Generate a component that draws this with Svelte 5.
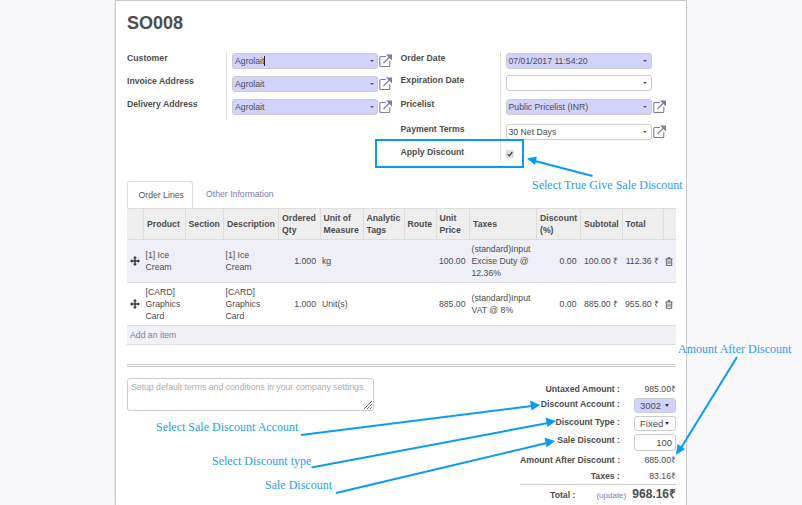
<script>
  const cols = [16.5, 41.5, 38.5, 55, 41.5, 43, 41, 32, 33.5, 67, 44, 41.5, 41, 13];
  const heads = [
    { t: '' }, { t: 'Product' }, { t: 'Section' }, { t: 'Description' }, { t: 'Ordered Qty' },
    { t: 'Unit of Measure' }, { t: 'Analytic Tags' }, { t: 'Route' }, { t: 'Unit Price' },
    { t: 'Taxes' }, { t: 'Discount (%)' }, { t: 'Subtotal' }, { t: 'Total' }, { t: '' }
  ];
  const lines = [
    { product: '[1] Ice Cream', unit: 'kg', price: '100.00', taxes: '(standard)Input Excise Duty @ 12.36%', sub: '100.00 ₹', total: '112.36 ₹', shade: true },
    { product: '[CARD] Graphics Card', unit: 'Unit(s)', price: '885.00', taxes: '(standard)Input VAT @ 8%', sub: '885.00 ₹', total: '955.80 ₹', shade: false }
  ];
</script>

{#snippet ext()}
  <svg class="ext" viewBox="0 0 13 13" width="13" height="13" aria-hidden="true">
    <path d="M7 2.5H2a1.2 1.2 0 0 0-1.2 1.2v7.6A1.2 1.2 0 0 0 2 12.5h7.6a1.2 1.2 0 0 0 1.2-1.2V7" fill="none" stroke="#7c7bad" stroke-width="1.1"/>
    <path d="M4.5 9 11 2.5M8.2 1h4.3v4.3z" fill="#7c7bad" stroke="#7c7bad" stroke-width="1.1"/>
  </svg>
{/snippet}

{#snippet drag()}
  <svg viewBox="0 0 10 10" width="10" height="10" aria-hidden="true">
    <path d="M5 0 7 2.2H5.7V4.3H7.8V3L10 5 7.8 7V5.7H5.7V7.8H7L5 10 3 7.8H4.3V5.7H2.2V7L0 5 2.2 3V4.3H4.3V2.2H3z" fill="#333"/>
  </svg>
{/snippet}

{#snippet trash()}
  <svg viewBox="0 0 8 9" width="8" height="9" aria-hidden="true">
    <path d="M.5 2h7M3 2V.7h2V2M1.3 2v6.4h5.4V2M3 3.5v3.5M5 3.5v3.5" fill="none" stroke="#555" stroke-width=".9"/>
  </svg>
{/snippet}

<div class="page">
  <main class="sheet">
    <h1>SO008</h1>

    <section class="groups">
      <div class="group left">
        <div class="labels">
          <label>Customer</label>
          <label>Invoice Address</label>
          <label>Delivery Address</label>
        </div>
        <div class="fields">
          <div class="fr"><span class="sel req">Agrolait<i class="cursor"></i><b class="car"></b></span>{@render ext()}</div>
          <div class="fr"><span class="sel req">Agrolait<b class="car"></b></span>{@render ext()}</div>
          <div class="fr"><span class="sel req">Agrolait<b class="car"></b></span>{@render ext()}</div>
        </div>
      </div>
      <div class="group right">
        <div class="labels">
          <label class="r1">Order Date</label>
          <label class="r2">Expiration Date</label>
          <label class="r3">Pricelist</label>
          <label class="r4">Payment Terms</label>
          <label class="r5">Apply Discount</label>
        </div>
        <div class="fields">
          <div class="fr r1"><span class="sel req">07/01/2017 11:54:20<b class="car"></b></span></div>
          <div class="fr r2"><span class="sel"><b class="car"></b></span></div>
          <div class="fr r3"><span class="sel req">Public Pricelist (INR)<b class="car"></b></span>{@render ext()}</div>
          <div class="fr r4"><span class="sel">30 Net Days<b class="car"></b></span>{@render ext()}</div>
          <div class="fr r5"><span class="check">
            <svg viewBox="0 0 8 8" width="6" height="6" aria-hidden="true"><path d="M1 4.5 3 6.5 7 1.5" fill="none" stroke="#333" stroke-width="1.6"/></svg>
          </span></div>
        </div>
      </div>
    </section>

    <nav class="tabs">
      <span class="tab active">Order Lines</span>
      <span class="tab">Other Information</span>
    </nav>

    <table>
      <colgroup>
        {#each cols as c}<col style:width="{c}px" />{/each}
      </colgroup>
      <thead>
        <tr>{#each heads as h}<th>{h.t}</th>{/each}</tr>
      </thead>
      <tbody>
        {#each lines as l}
          <tr class:shade={l.shade}>
            <td class="dr">{@render drag()}</td>
            <td>{l.product}</td>
            <td></td>
            <td>{l.product}</td>
            <td class="num">1.000</td>
            <td>{l.unit}</td>
            <td></td>
            <td></td>
            <td class="num">{l.price}</td>
            <td>{l.taxes}</td>
            <td class="num">0.00</td>
            <td class="num">{l.sub}</td>
            <td class="num">{l.total}</td>
            <td class="tr">{@render trash()}</td>
          </tr>
        {/each}
        <tr class="add"><td colspan="14"><span>Add an item</span></td></tr>
      </tbody>
    </table>

    <hr />

    <section class="bottom">
      <div class="notes">Setup default terms and conditions in your company settings.
        <svg class="grip" viewBox="0 0 8 8" width="8" height="8" aria-hidden="true"><path d="M0 8 8 0M3 8 8 3M6 8 8 6" stroke="#444" stroke-width=".8" fill="none"/></svg>
      </div>
      <div class="totals">
        <div class="t t1"><span>Untaxed Amount :</span><em>985.00₹</em></div>
        <div class="t t2"><span>Discount Account :</span><em class="mini req"><i class="clip">30020</i><b class="car dark"></b></em></div>
        <div class="t t3"><span>Discount Type :</span><em class="mini">Fixed<b class="car dark"></b></em></div>
        <div class="t t4"><span>Sale Discount :</span><em class="inp">100</em></div>
        <div class="t t5"><span>Amount After Discount :</span><em>885.00₹</em></div>
        <div class="t t6"><span>Taxes :</span><em>83.16₹</em></div>
        <div class="grand"><span>Total :</span><a href="#update">(update)</a><strong>968.16₹</strong></div>
      </div>
    </section>
  </main>

  <div class="overlay">
    <div class="box"></div>
    <svg class="arrows" width="802" height="505" viewBox="0 0 802 505" aria-hidden="true">
      <g stroke="#0a9bf5" stroke-width="2" fill="#0a9bf5">
        <line x1="592.5" y1="176" x2="535" y2="161" />
        <line x1="301" y1="435" x2="532" y2="406" />
        <line x1="311.5" y1="467.5" x2="548" y2="423" />
        <line x1="336" y1="493" x2="547" y2="443" />
        <line x1="737" y1="357" x2="681" y2="448" />
      </g>
      <g fill="#0a9bf5">
        <polygon points="527,158.5 537,156.5 535,165" />
        <polygon points="540,405 530,400.5 531.5,410.5" />
        <polygon points="556,421 545.5,417.5 547.5,427" />
        <polygon points="555,441 544.5,437.5 546.5,447.5" />
        <polygon points="676,455 677.5,444 685,449" />
      </g>
    </svg>
    <span class="note n1">Select True Give Sale Discount</span>
    <span class="note n2">Amount After Discount</span>
    <span class="note n3">Select Sale Discount Account</span>
    <span class="note n4">Select Discount type</span>
    <span class="note n5">Sale Discount</span>
  </div>
</div>

<style>
  :global(body) {
    margin: 0;
    background: #f8f8fb;
    overflow: hidden;
  }
  .page {
    position: relative;
    width: 802px;
    height: 505px;
    overflow: hidden;
    font-family: "Liberation Sans", Arial, sans-serif;
    font-size: 8.7px;
    color: #4c4c4c;
  }
  .sheet {
    box-sizing: border-box;
    width: 572px;
    height: 505px;
    margin-left: 115px;
    padding: 0 10px 0 11px;
    background: #fff;
    border: 1px solid #c9c9d2;
    border-bottom: 0;
    box-shadow: -1px 0 2px rgba(0, 0, 0, 0.06);
  }
  h1 {
    margin: 0;
    padding-top: 12px;
    height: 39px;
    box-sizing: border-box;
    font-size: 18px;
    line-height: 21px;
    font-weight: 700;
    color: #4c4c4c;
  }
  .groups {
    display: flex;
    height: 141px;
    padding-top: 12px;
    box-sizing: border-box;
  }
  .group { display: flex; }
  .left { width: 273.5px; }
  .labels label {
    display: block;
    font-weight: 700;
    white-space: nowrap;
  }
  .left .labels { width: 99px; }
  .left .labels label { height: 23px; line-height: 12px; }
  .left .fields {
    height: 68px;
    padding-left: 5px;
    border-left: 1px solid #ddd;
  }
  .left .fr { height: 23px; padding-top: 1px; box-sizing: border-box; }
  .fr { display: flex; align-items: flex-start; }
  .right .labels { width: 99px; }
  .right .fields {
    height: 109px;
    padding-left: 5px;
    border-left: 1px solid #ddd;
  }
  .right .labels label { line-height: 12px; }
  .right label.r1 { height: 22px; }
  .right label.r2 { height: 24px; }
  .right label.r3 { height: 25px; }
  .right label.r4 { height: 23px; }
  .right .fr { box-sizing: border-box; padding-top: 1px; }
  .right .fr.r1 { height: 22px; }
  .right .fr.r2 { height: 24px; }
  .right .fr.r3 { height: 25px; }
  .right .fr.r4 { height: 26px; }
  .sel {
    position: relative;
    display: block;
    box-sizing: border-box;
    width: 146px;
    height: 16px;
    padding: 0 2px;
    line-height: 14px;
    background: #fff;
    border: 1px solid #ccc;
    border-radius: 3px;
    white-space: nowrap;
  }
  .req { background: #d2d2ff; }
  .car {
    position: absolute;
    right: 3.5px;
    top: 6px;
    border-left: 2px solid transparent;
    border-right: 2px solid transparent;
    border-top: 2px solid #555;
  }
  .car.dark {
    top: 50%;
    right: 6px;
    margin-top: -1px;
    border-top: 3px solid #333;
  }
  .cursor {
    display: inline-block;
    width: 1px;
    height: 10px;
    background: #222;
    vertical-align: -2px;
  }
  .ext { margin: 1px 0 0 1px; flex: none; }
  .check {
    display: flex;
    align-items: center;
    justify-content: center;
    width: 8px;
    height: 8px;
    background: #ddd;
    border-radius: 1px;
  }
  .tabs {
    display: flex;
    height: 27px;
    box-sizing: border-box;
  }
  .tab {
    box-sizing: border-box;
    height: 27px;
    padding: 0 10.5px;
    line-height: 27px;
    color: #7c7bad;
    white-space: nowrap;
  }
  .tab + .tab { margin-left: 2.5px; }
  .tab.active {
    width: 66px;
    color: #555;
    background: #fff;
    border: 1px solid #ddd;
    border-bottom: 0;
    border-radius: 3px 3px 0 0;
    position: relative;
    z-index: 1;
    line-height: 26px;
  }
  table {
    table-layout: fixed;
    width: 549px;
    border-collapse: collapse;
    line-height: 12px;
  }
  th {
    height: 31px;
    box-sizing: border-box;
    padding: 0 2px 0 3px;
    text-align: left;
    font-weight: 700;
    background: #eee;
    border: 1px solid #ddd;
    border-width: 1px 1px 1px 0;
    overflow: hidden;
  }
  th:last-child { border-right: 0; }
  td {
    height: 43px;
    box-sizing: border-box;
    padding: 0 2px 0 2px;
    border-bottom: 1px solid #ddd;
    overflow: hidden;
    vertical-align: middle;
  }
  .shade td { background: #eeeff7; }
  .num { text-align: right; padding-right: 4px; white-space: nowrap; }
  .dr { padding: 0 0 0 3px; }
  .dr svg, .tr svg { display: block; }
  td.tr { padding: 0 0 0 2px; }
  .add td {
    height: 19px;
    background: #f0f0f7;
    padding-left: 3px;
    color: #7c7bad;
  }
  hr {
    margin: 19px 0 0;
    height: 3px;
    box-sizing: border-box;
    border: 0;
    border-top: 1px solid #ccc;
    border-bottom: 1px solid #ccc;
  }
  .bottom { display: flex; justify-content: space-between; padding-top: 11px; }
  .notes {
    position: relative;
    box-sizing: border-box;
    width: 247px;
    height: 33px;
    padding: 3px 3px;
    line-height: 11px;
    color: #aaa;
    border: 1px solid #ccc;
    border-radius: 3px;
    white-space: nowrap;
  }
  .grip { position: absolute; right: 1px; bottom: 1px; }
  .totals {
    width: 156px;
    margin-top: 3px;
    position: relative;
  }
  .t {
    display: flex;
    justify-content: flex-end;
    align-items: center;
    height: 18px;
  }
  .t span {
    font-weight: 700;
    margin-right: 14px;
    white-space: nowrap;
  }
  .t em {
    font-style: normal;
    display: block;
    width: 42px;
    text-align: right;
    white-space: nowrap;
  }
  .t1 { height: 15px; }
  .t2 { height: 18px; }
  .t3 { height: 18px; }
  .t4 { height: 20px; }
  .t5 { height: 16px; }
  .t6 { height: 15px; }
  .t2 span, .t3 span { position: relative; top: -1px; }
  .t4 span { position: relative; top: -2px; }
  .t em.mini {
    position: relative;
    box-sizing: border-box;
    height: 15px;
    font-size: 9.5px;
    line-height: 13px;
    text-align: left;
    padding-left: 5px;
    border: 1px solid #ccc;
    border-radius: 3px;
  }
  .clip {
    display: block;
    width: 21px;
    overflow: hidden;
    font-style: normal;
  }
  .t em.inp {
    box-sizing: border-box;
    height: 17px;
    font-size: 9.5px;
    line-height: 15px;
    padding-right: 3px;
    border: 1px solid #ccc;
    border-radius: 3px;
  }
  .grand {
    display: flex;
    align-items: center;
    height: 21px;
    margin-top: 1px;
    border-top: 1px solid #ccc;
    box-sizing: border-box;
    white-space: nowrap;
  }
  .grand span { font-weight: 700; margin-left: 30px; }
  .grand a {
    margin-left: 21px;
    font-size: 8px;
    color: #7c7bad;
    text-decoration: none;
  }
  .grand strong {
    margin-left: auto;
    margin-top: -3px;
    font-size: 12px;
  }
  .overlay { position: absolute; inset: 0; pointer-events: none; }
  .arrows { position: absolute; inset: 0; }
  .box {
    position: absolute;
    left: 375px;
    top: 139px;
    width: 149px;
    height: 29px;
    box-sizing: border-box;
    border: 2px solid #0a9bf5;
  }
  .note {
    position: absolute;
    font-family: "Liberation Serif", "Times New Roman", serif;
    font-size: 12px;
    line-height: 14px;
    color: #2a9df4;
    white-space: nowrap;
  }
  .n1 { left: 532px; top: 178px; }
  .n2 { left: 678px; top: 342px; }
  .n3 { left: 156px; top: 420px; }
  .n4 { left: 212px; top: 454px; }
  .n5 { left: 265px; top: 478px; }
</style>
